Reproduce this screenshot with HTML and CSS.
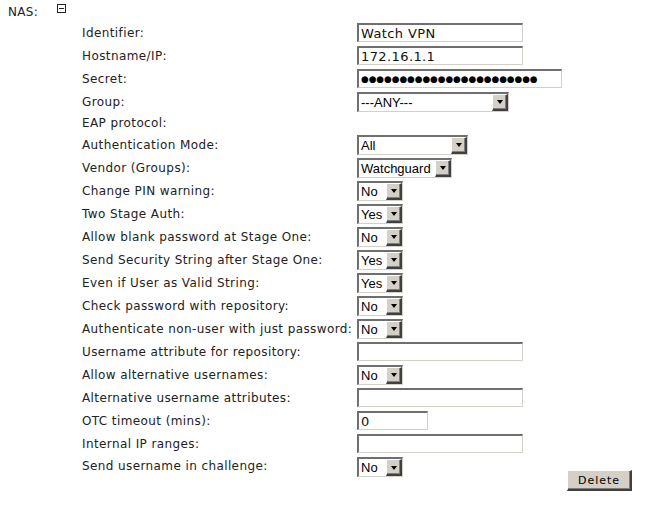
FILE: index.html
```html
<!DOCTYPE html>
<html>
<head>
<meta charset="utf-8">
<link rel="stylesheet" href="styles.css">
</head>
<body>
<div class="page">
  <div class="nas-row">
    <span class="nas-label">NAS:</span>
    <svg class="toggle" width="9" height="9" viewBox="0 0 9 9"><rect x="0.5" y="0.5" width="8" height="8" fill="#fff" stroke="#222"/><rect x="2" y="4" width="5" height="1" fill="#222"/></svg>
  </div>
  <div class="form">
    <div class="row"><span class="lbl">Identifier:</span><input class="field w166" type="text" value="Watch VPN"></div>
    <div class="row"><span class="lbl">Hostname/IP:</span><input class="field w166" type="text" value="172.16.1.1"></div>
    <div class="row"><span class="lbl">Secret:</span><input class="field pw w205" type="text" value="●●●●●●●●●●●●●●●●●●●●●●●"></div>
    <div class="row"><span class="lbl">Group:</span><div class="sel w152"><span class="val">---ANY---</span><span class="btn"><i class="tri"></i></span></div></div>
    <div class="row short"><span class="lbl">EAP protocol:</span></div>
    <div class="row"><span class="lbl">Authentication Mode:</span><div class="sel w111"><span class="val">All</span><span class="btn"><i class="tri"></i></span></div></div>
    <div class="row"><span class="lbl">Vendor (Groups):</span><div class="sel w95"><span class="val">Watchguard</span><span class="btn"><i class="tri"></i></span></div></div>
    <div class="row"><span class="lbl">Change PIN warning:</span><div class="sel w46"><span class="val">No</span><span class="btn"><i class="tri"></i></span></div></div>
    <div class="row"><span class="lbl">Two Stage Auth:</span><div class="sel w46"><span class="val">Yes</span><span class="btn"><i class="tri"></i></span></div></div>
    <div class="row"><span class="lbl">Allow blank password at Stage One:</span><div class="sel w46"><span class="val">No</span><span class="btn"><i class="tri"></i></span></div></div>
    <div class="row"><span class="lbl">Send Security String after Stage One:</span><div class="sel w46"><span class="val">Yes</span><span class="btn"><i class="tri"></i></span></div></div>
    <div class="row"><span class="lbl">Even if User as Valid String:</span><div class="sel w46"><span class="val">Yes</span><span class="btn"><i class="tri"></i></span></div></div>
    <div class="row"><span class="lbl">Check password with repository:</span><div class="sel w46"><span class="val">No</span><span class="btn"><i class="tri"></i></span></div></div>
    <div class="row"><span class="lbl">Authenticate non-user with just password:</span><div class="sel w46"><span class="val">No</span><span class="btn"><i class="tri"></i></span></div></div>
    <div class="row"><span class="lbl">Username attribute for repository:</span><input class="field w166" type="text" value=""></div>
    <div class="row"><span class="lbl">Allow alternative usernames:</span><div class="sel w46"><span class="val">No</span><span class="btn"><i class="tri"></i></span></div></div>
    <div class="row"><span class="lbl">Alternative username attributes:</span><input class="field w166" type="text" value=""></div>
    <div class="row"><span class="lbl">OTC timeout (mins):</span><input class="field w71" type="text" value="0"></div>
    <div class="row"><span class="lbl">Internal IP ranges:</span><input class="field w166" type="text" value=""></div>
    <div class="row last"><span class="lbl">Send username in challenge:</span><div class="sel w46"><span class="val">No</span><span class="btn"><i class="tri"></i></span></div><button class="delete" type="button">Delete</button></div>
  </div>
</div>
</body>
</html>
```

FILE: styles.css
```css
html, body {
  margin: 0;
  padding: 0;
  background: #fff;
}
body {
  font-family: "DejaVu Sans", Verdana, sans-serif;
  font-size: 12px;
  color: #222;
}
.page {
  padding: 0 0 0 8px;
}
.nas-row {
  height: 21px;
  display: flex;
  align-items: center;
}
.nas-label {
  width: 49px;
  margin-top: 3px;
  letter-spacing: 0.3px;
}
.toggle {
  display: block;
  margin-top: -4px;
}
.form {
  padding-left: 74px;
}
.row {
  height: 23px;
  display: flex;
  align-items: center;
}
.row.short {
  height: 20px;
}
.lbl {
  width: 275px;
  flex: none;
  white-space: nowrap;
  letter-spacing: 0.4px;
}
.field {
  box-sizing: border-box;
  height: 19px;
  margin: 0;
  padding: 0 2px;
  border-style: solid;
  border-width: 2px 1px 1px 2px;
  border-color: #6f6f6f #d4d0c8 #d4d0c8 #6f6f6f;
  background: #fff;
  font-family: "DejaVu Sans", Verdana, sans-serif;
  font-size: 13px;
  letter-spacing: 0.4px;
  color: #111;
  outline: none;
}
.field.pw {
  font-size: 8.8px;
  letter-spacing: 0;
  color: #000;
}
.w166 { width: 166px; }
.w205 { width: 205px; }
.w71 { width: 71px; }
.sel {
  box-sizing: border-box;
  height: 20px;
  display: flex;
  border-style: solid;
  border-width: 2px 1px 1px 2px;
  border-color: #6f6f6f #d4d0c8 #d4d0c8 #6f6f6f;
  background: #fff;
  flex: none;
}
.w152 { width: 152px; }
.w111 { width: 111px; }
.w95 { width: 95px; }
.w46 { width: 46px; }
.val {
  flex: 1;
  padding-left: 2px;
  font-family: "Liberation Sans", Arial, sans-serif;
  font-size: 13px;
  line-height: 17px;
  color: #000;
  white-space: nowrap;
  overflow: hidden;
}
.btn {
  box-sizing: border-box;
  width: 16px;
  height: 17px;
  background: #d4d0c8;
  border-style: solid;
  border-width: 1px 2px 2px 1px;
  border-color: #ffffff #404040 #404040 #ffffff;
  box-shadow: inset -1px -1px 0 #808080;
  display: flex;
  align-items: center;
  justify-content: center;
}
.tri {
  display: block;
  width: 0;
  height: 0;
  border-left: 3.5px solid transparent;
  border-right: 3.5px solid transparent;
  border-top: 4px solid #000;
  margin-top: 1px;
}
.row.last {
  height: auto;
  align-items: flex-start;
}
.row.last .lbl {
  line-height: 23px;
}
.row.last .sel {
  margin-top: 2px;
}
.delete {
  flex: none;
  margin: 15px 0 0 164px;
  box-sizing: border-box;
  width: 65px;
  height: 21px;
  padding: 0;
  background: #d4d0c8;
  border-style: solid;
  border-width: 1px 2px 2px 1px;
  border-color: #ffffff #404040 #404040 #ffffff;
  box-shadow: inset -1px -1px 0 #808080;
  font-family: "DejaVu Sans", Verdana, sans-serif;
  font-size: 11px;
  line-height: 17px;
  letter-spacing: 1px;
  color: #000;
}
```
